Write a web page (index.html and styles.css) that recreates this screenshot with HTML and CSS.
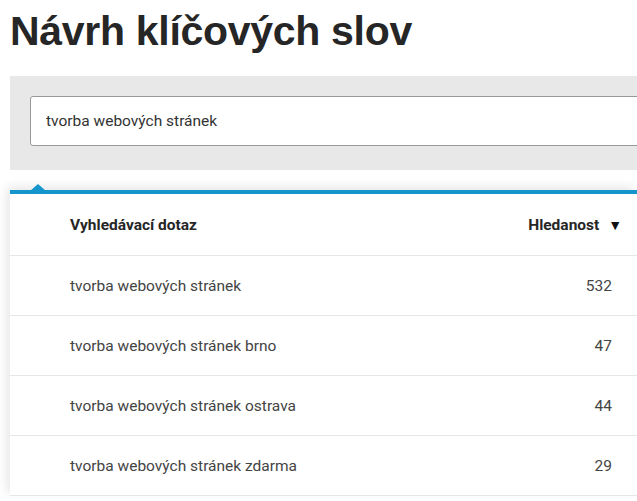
FILE: index.html
```html
<!DOCTYPE html>
<html lang="cs">
<head>
  <meta charset="UTF-8" />
  <title>Návrh klíčových slov</title>
  <link rel="stylesheet" href="styles.css">
</head>
<body>
  <h1 class="title">Návrh klíčových slov</h1>

  <div class="search-box">
    <input class="search-input" type="text" value="tvorba webových stránek">
  </div>

  <div class="results">
    <span class="notch"></span>
    <div class="row head">
      <span class="query">Vyhledávací dotaz</span>
      <span class="count">Hledanost <span class="arrow">▼</span></span>
    </div>
    <div class="row">
      <span class="query">tvorba webových stránek</span>
      <span class="count">532</span>
    </div>
    <div class="row">
      <span class="query">tvorba webových stránek brno</span>
      <span class="count">47</span>
    </div>
    <div class="row">
      <span class="query">tvorba webových stránek ostrava</span>
      <span class="count">44</span>
    </div>
    <div class="row">
      <span class="query">tvorba webových stránek zdarma</span>
      <span class="count">29</span>
    </div>
  </div>
</body>
</html>
```

FILE: styles.css
```css
body {
  margin: 0;
  padding: 0;
  background-color: #fff;
  font-family: Roboto, "Liberation Sans", sans-serif;
  color: #444;
  overflow: hidden;
}
.title {
  margin: 0;
  padding: 1px 0 0 10px;
  height: 75px;
  font-family: "Liberation Sans", Arial, sans-serif;
  font-size: 41px;
  font-weight: bold;
  line-height: 60px;
  color: #262626;
  letter-spacing: -0.3px;
}
.search-box {
  margin-left: 10px;
  height: 94px;
  box-sizing: border-box;
  padding: 20px 0 0 20px;
  background-color: #e8e8e8;
  overflow: hidden;
}
.search-input {
  display: block;
  width: 110%;
  height: 50px;
  box-sizing: border-box;
  margin: 0;
  padding: 0 15px;
  border: 1px solid #999;
  border-radius: 3px;
  background: #fff;
  font-family: Roboto, sans-serif;
  font-size: 15.5px;
  color: #333;
  outline: none;
}
.results {
  position: relative;
  margin: 20px 0 0 10px;
  border-top: 4px solid #1496cc;
  background: #fff;
  box-shadow: -3px -3px 10px rgba(0, 0, 0, 0.1);
}
.notch {
  position: absolute;
  top: -10px;
  left: 20px;
  width: 0;
  height: 0;
  border-left: 8px solid transparent;
  border-right: 8px solid transparent;
  border-bottom: 7px solid #1496cc;
}
.row {
  display: flex;
  align-items: center;
  justify-content: space-between;
  height: 59px;
  border-bottom: 1px solid #e6e6e6;
  padding: 0 25px 0 60px;
  font-size: 15.5px;
}
.head {
  height: 61px;
  padding-right: 15px;
  font-weight: bold;
  color: #262626;
}
.arrow {
  font-size: 14px;
  color: #111;
  margin-left: 5px;
}
```
